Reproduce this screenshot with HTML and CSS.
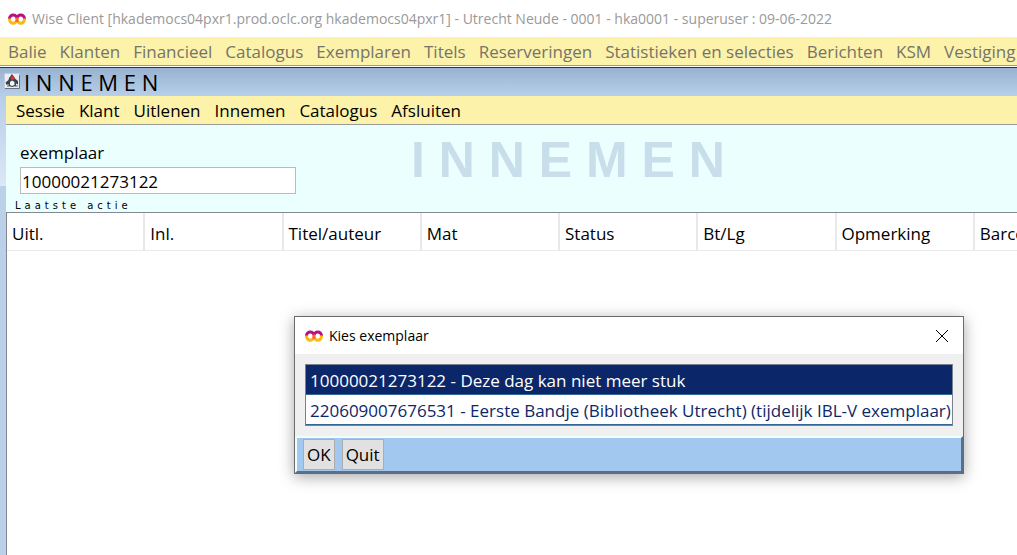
FILE: index.html
```
<!DOCTYPE html>
<html lang="nl">
<head>
    <meta charset="UTF-8">
    <meta name="viewport" content="width=device-width, initial-scale=1.0">
    <title>Wise Client</title>
    <link rel="stylesheet" href="styles.css">
</head>
<body>
    <svg width="0" height="0" class="sprite" aria-hidden="true">
        <symbol id="wise-logo" viewBox="0 0 18 12">
            <g fill="none" stroke-width="3">
                <path d="M1.500 5a3.750 4.500 0 0 0 7.500 1.500a3.750 4.500 0 0 0 7.500-1.500" stroke="#fdb913"/>
                <path d="M1.500 5.500a3.750 3.500 0 0 1 7.500 0a3.750 3.500 0 0 1 7.500 0" stroke="#b5127f"/>
                <path d="M9 4.500v4.500" stroke="#f26a3d"/>
            </g>
        </symbol>
    </svg>

    <header class="titlebar">
        <svg class="logo"><use href="#wise-logo"/></svg>
        <span>Wise Client [hkademocs04pxr1.prod.oclc.org hkademocs04pxr1] - Utrecht Neude - 0001 - hka0001 - superuser : 09-06-2022</span>
    </header>

    <nav class="menu menu-main">
        <button type="button">Balie</button>
        <button type="button">Klanten</button>
        <button type="button">Financieel</button>
        <button type="button">Catalogus</button>
        <button type="button">Exemplaren</button>
        <button type="button">Titels</button>
        <button type="button">Reserveringen</button>
        <button type="button">Statistieken en selecties</button>
        <button type="button">Berichten</button>
        <button type="button">KSM</button>
        <button type="button">Vestiging</button>
    </nav>

    <main class="window">
        <div class="window-title">
            <svg class="java" viewBox="0 0 16 16">
                <rect x="0.500" y="0.500" width="15" height="15" rx="1" fill="#e9eef3" stroke="#c3ccd6"/>
                <path d="M1 15.500h14.500V2" fill="none" stroke="#66727f"/>
                <path d="M8 1L5 5L4.500 7L1.500 9.500L2.500 12l2-1V13l3.500 1l4-1V10.500l2 1V8L11.500 6z" fill="#39434c"/>
                <path d="M6 9l2-1.500L10.500 9v3L8 13l-2-1z" fill="#f4f6f7"/>
                <path d="M3 13h2M11 13h3" stroke="#59636c"/>
                <circle cx="8.500" cy="5" r="2" fill="#dc3030"/>
            </svg>
            <h1>I N N E M E N</h1>
        </div>

        <div class="window-body">
            <nav class="menu menu-window">
                <button type="button">Sessie</button>
                <button type="button">Klant</button>
                <button type="button">Uitlenen</button>
                <button type="button">Innemen</button>
                <button type="button">Catalogus</button>
                <button type="button">Afsluiten</button>
            </nav>

            <section class="panel">
                <div class="field">
                    <label for="exemplaar">exemplaar</label>
                    <input type="text" id="exemplaar" value="10000021273122">
                </div>
                <div class="watermark">I N N E M E N</div>
                <div class="last-action">Laatste actie</div>
            </section>

            <section class="results">
                <table>
                    <thead>
                        <tr>
                            <th>Uitl.</th>
                            <th>Inl.</th>
                            <th>Titel/auteur</th>
                            <th>Mat</th>
                            <th>Status</th>
                            <th>Bt/Lg</th>
                            <th>Opmerking</th>
                            <th>Barcode</th>
                        </tr>
                    </thead>
                    <tbody></tbody>
                </table>
            </section>
        </div>
    </main>

    <div class="dialog" role="dialog" aria-labelledby="dialog-title">
        <div class="dialog-title">
            <svg class="logo"><use href="#wise-logo"/></svg>
            <label id="dialog-title" for="keuze">Kies exemplaar</label>
            <button type="button" class="close" aria-label="Sluiten">
                <svg viewBox="0 0 12 12"><path d="M0 0L12 12M12 0L0 12"/></svg>
            </button>
        </div>
        <div class="dialog-body">
            <select id="keuze" size="2">
                <option selected>10000021273122 - Deze dag kan niet meer stuk</option>
                <option>220609007676531 - Eerste Bandje (Bibliotheek Utrecht) (tijdelijk IBL-V exemplaar)</option>
            </select>
        </div>
        <div class="dialog-buttons">
            <button type="button">OK</button>
            <button type="button">Quit</button>
        </div>
    </div>
</body>
</html>
```

FILE: styles.css
```
* {
    box-sizing: border-box;
}
body {
    margin: 0;
    height: 100vh;
    display: flex;
    flex-direction: column;
    overflow: hidden;
    font-family: "Open Sans", "Noto Sans", sans-serif;
    font-size: 17px;
    line-height: 24px;
    color: #000;
    background-color: #fff;
}
button,
input,
select {
    font: inherit;
    color: inherit;
    margin: 0;
}
.sprite {
    position: absolute;
}
.logo {
    width: 18px;
    height: 12px;
    flex: none;
}

/* main window */
.titlebar {
    display: flex;
    align-items: center;
    gap: 6px;
    height: 37px;
    padding: 0 8px;
    font-size: 14px;
    color: #999;
    white-space: nowrap;
}
.menu {
    display: flex;
    height: 29px;
    gap: 14px;
    background-color: #fcf2aa;
    border-bottom: 1px solid #999;
    overflow: hidden;
}
.menu button {
    flex: none;
    padding: 2px 0 0;
    border: none;
    background: none;
    white-space: nowrap;
}
.menu-main {
    gap: 13px;
    padding-left: 8px;
    color: #75746a;
}
.menu-window {
    padding-left: 10px;
}

/* inner window */
.window {
    flex: 1;
    display: flex;
    flex-direction: column;
    min-height: 0;
    margin-top: 1px;
    border-top: 1px solid #333;
    background: #bbd1ea linear-gradient(#b7cdea, #dce8f6) 0 28px / 100% 90px no-repeat;
}
.window-title {
    display: flex;
    align-items: center;
    gap: 4px;
    height: 28px;
    padding-left: 4px;
    background: linear-gradient(#98b2d0, #b7cfe9);
}
.window-title h1 {
    margin: 0;
    font-size: 22px;
    line-height: 28px;
    font-weight: normal;
}
.java {
    flex: none;
    width: 16px;
    height: 16px;
    margin-bottom: 2px;
}
.window-body {
    flex: 1;
    display: flex;
    flex-direction: column;
    min-height: 0;
    margin-left: 6px;
}
.panel {
    display: grid;
    grid-template-columns: 391px 1fr;
    background-color: #ebffff;
}
.field {
    padding: 16px 0 0 14px;
}
.field label {
    display: block;
    line-height: 24px;
    padding-bottom: 2px;
}
.field input {
    display: block;
    width: 276px;
    height: 27px;
    padding: 1px 1px 0;
    border: 1px solid #bbb;
    background-color: #fff;
}
.watermark {
    padding: 5px 0 0 14px;
    font-family: "Liberation Sans", Arial, sans-serif;
    font-size: 50px;
    line-height: 60px;
    font-weight: bold;
    color: #c8deeb;
}
.last-action {
    grid-column: 1 / 3;
    padding: 6px 0 0 9px;
    font-family: "DejaVu Sans", sans-serif;
    font-size: 10px;
    line-height: 12px;
    letter-spacing: 4px;
}
.results {
    flex: 1;
    overflow: hidden;
    background-color: #fff;
    border-top: 1px solid #848890;
    border-left: 1px solid #848890;
}
.results table {
    width: 1106px;
    table-layout: fixed;
    border-collapse: separate;
    border-spacing: 0;
}
.results th {
    height: 38px;
    padding: 4px 5px 0;
    font-weight: normal;
    text-align: left;
    border-right: 2px solid #e8e8e8;
    border-bottom: 1px solid #ebebeb;
}

/* dialog */
.dialog {
    position: absolute;
    top: 316px;
    left: 294px;
    width: 670px;
    border: 1px solid #6b6b6b;
    background-color: #f0f0f0;
    box-shadow: 0 3px 14px rgba(0, 0, 0, 0.35);
}
.dialog-title {
    display: flex;
    align-items: center;
    gap: 6px;
    height: 37px;
    padding: 0 15px 0 10px;
    font-size: 14px;
    background-color: #fff;
}
.close {
    display: flex;
    margin-left: auto;
    padding: 0;
    border: none;
    background: none;
}
.close svg {
    width: 12px;
    height: 12px;
    overflow: visible;
    stroke: #000;
}
.dialog-body {
    padding: 10px;
}
.dialog-body select {
    display: block;
    width: 100%;
    height: 62px;
    padding: 0;
    border: 1px solid #7a8290;
    border-radius: 0;
    outline: none;
    overflow: hidden;
    color: #0c2769;
    background-color: #fff;
}
.dialog-body option {
    height: 30px;
    padding: 4px 4px 0;
    border-bottom: 1px solid #336699;
}
.dialog-body option:checked {
    color: #fff;
    background: #0c2769 linear-gradient(#0c2769, #0c2769);
}
.dialog-buttons {
    display: flex;
    gap: 7px;
    padding: 1px 6px;
    border: 2px solid;
    border-color: #f0ffff #5b6f85 #5b6f85 #f0ffff;
    background-color: #a2c8ef;
}
.dialog-buttons button {
    height: 31px;
    padding: 1px 3px 0;
    border: 1px solid #adadad;
    background-color: #e1e1e1;
}
```
